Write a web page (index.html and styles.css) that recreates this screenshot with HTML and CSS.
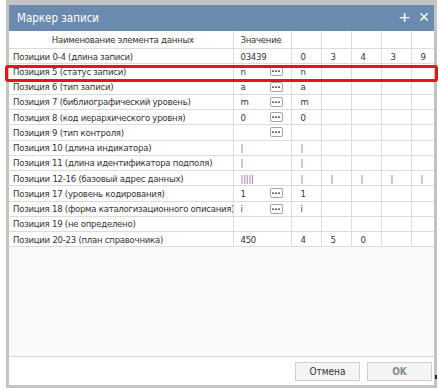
FILE: index.html
```html
<!DOCTYPE html>
<html lang="ru">
<head>
<meta charset="utf-8"/>
<title>Маркер записи</title>
<link rel="stylesheet" href="styles.css">
</head>
<body>
<div class="dialog">
  <div class="titlebar">
    <span class="title">Маркер записи</span>
    <span class="tools"><span class="tool">+</span><span class="tool close">×</span></span>
  </div>
  <div class="content">
    <table class="grid">
      <colgroup>
        <col class="c-name"><col class="c-val"><col class="c-ch"><col class="c-ch"><col class="c-ch"><col class="c-ch"><col class="c-last">
      </colgroup>
      <tr class="head">
        <th class="center">Наименование элемента данных</th><th>Значение</th><th></th><th></th><th></th><th></th><th></th>
      </tr>
      <tr><td>Позиции 0-4 (длина записи)</td><td>03439</td><td>0</td><td>3</td><td>4</td><td>3</td><td>9</td></tr>
      <tr><td>Позиция 5 (статус записи)</td><td><div class="val">n<span class="dots">...</span></div></td><td>n</td><td></td><td></td><td></td><td></td></tr>
      <tr><td>Позиция 6 (тип записи)</td><td><div class="val">a<span class="dots">...</span></div></td><td>a</td><td></td><td></td><td></td><td></td></tr>
      <tr><td>Позиция 7 (библиографический уровень)</td><td><div class="val">m<span class="dots">...</span></div></td><td>m</td><td></td><td></td><td></td><td></td></tr>
      <tr><td>Позиция 8 (код иерархического уровня)</td><td><div class="val">0<span class="dots">...</span></div></td><td>0</td><td></td><td></td><td></td><td></td></tr>
      <tr><td>Позиция 9 (тип контроля)</td><td><div class="val">&nbsp;<span class="dots">...</span></div></td><td></td><td></td><td></td><td></td><td></td></tr>
      <tr><td>Позиция 10 (длина индикатора)</td><td><span class="sp">|</span></td><td><span class="sp">|</span></td><td></td><td></td><td></td><td></td></tr>
      <tr><td>Позиция 11 (длина идентификатора подполя)</td><td><span class="sp">|</span></td><td><span class="sp">|</span></td><td></td><td></td><td></td><td></td></tr>
      <tr><td>Позиции 12-16 (базовый адрес данных)</td><td><span class="sp">|||||</span></td><td><span class="sp">|</span></td><td><span class="sp">|</span></td><td><span class="sp">|</span></td><td><span class="sp">|</span></td><td><span class="sp">|</span></td></tr>
      <tr><td>Позиция 17 (уровень кодирования)</td><td><div class="val">1<span class="dots">...</span></div></td><td>1</td><td></td><td></td><td></td><td></td></tr>
      <tr><td>Позиция 18 (форма каталогизационного описания)</td><td><div class="val">i<span class="dots">...</span></div></td><td>i</td><td></td><td></td><td></td><td></td></tr>
      <tr><td>Позиция 19 (не определено)</td><td></td><td></td><td></td><td></td><td></td><td></td></tr>
      <tr><td>Позиции 20-23 (план справочника)</td><td>450</td><td>4</td><td>5</td><td>0</td><td></td><td></td></tr>
    </table>
  </div>
  <div class="footer">
    <button class="btn">Отмена</button>
    <button class="btn disabled">OK</button>
  </div>
  <span class="highlight"></span>
  <span class="grip"></span>
</div>
</body>
</html>
```

FILE: styles.css
```css
body {
  margin: 0;
  background: #fff;
  font-family: "DejaVu Sans Condensed", "DejaVu Sans", sans-serif;
  font-stretch: semi-condensed;
  font-size: 9.5px;
  letter-spacing: -0.25px;
  color: #333;
}
.dialog {
  position: relative;
  margin-left: 6px;
  width: 425px;
  height: 380px;
  border: 3px solid #c3c3c3;
  border-top-width: 5px;
  background: #f9f9f9;
  display: flex;
  flex-direction: column;
}
.titlebar {
  height: 26px;
  background: #6a8bad;
  color: #fff;
  display: flex;
  align-items: center;
  justify-content: space-between;
  padding: 0 5px 0 8px;
}
.title {
  font-size: 11.5px;
  letter-spacing: 0;
}
.tools {
  display: flex;
  gap: 9px;
  font-family: "Liberation Sans", Arial, sans-serif;
  font-size: 19px;
}
.close { font-size: 18px; }
.content {
  flex: 1;
}
.grid {
  border-collapse: collapse;
  table-layout: fixed;
  width: 425px;
  background: #fff;
}
.c-name { width: 224px; }
.c-val { width: 58px; }
.c-ch { width: 30px; }
.c-last { width: 23px; }
.grid th,
.grid td {
  border: 1px solid #dcdcdc;
  height: 14.25px;
  padding: 0 0 0 4px;
  text-align: left;
  font-weight: normal;
  white-space: nowrap;
  overflow: hidden;
}
.grid tr td:first-child,
.grid tr th:first-child { border-left: none; }
.grid tr td:last-child,
.grid tr th:last-child { border-right: none; }
.grid th {
  height: 17px;
  border-top: none;
}
.grid th.center { text-align: center; }
.grid td + td,
.grid th + th { padding-left: 7px; }
.grid td + td + td { padding-left: 9px; }
.val {
  display: flex;
  align-items: center;
  justify-content: space-between;
  padding-right: 8px;
}
.dots {
  display: inline-block;
  width: 11px;
  height: 8px;
  line-height: 5px;
  border: 1px solid #a5a5a5;
  border-radius: 2px;
  background: #fff;
  font-size: 9px;
  font-weight: bold;
  letter-spacing: 0;
  text-align: center;
  color: #333;
}
.sp { color: #8c5a8c; }
.footer {
  height: 28px;
  border-top: 1px solid #d6d6d6;
  background: #fff;
  display: flex;
  align-items: center;
  justify-content: flex-end;
  gap: 7px;
  padding-right: 2px;
}
.btn {
  width: 65px;
  height: 19px;
  border: 1px solid #cfcfcf;
  background: #f4f4f4;
  font-family: inherit;
  font-stretch: inherit;
  font-size: 10px;
  color: #333;
  padding: 0;
}
.btn.disabled {
  color: #7d8c99;
  font-weight: bold;
}
.highlight {
  position: absolute;
  left: -4px;
  top: 60px;
  width: 427px;
  height: 11px;
  border: 3px solid #e8141b;
  border-radius: 3px;
}
.grip {
  position: absolute;
  right: -3px;
  bottom: 6px;
  width: 2px;
  height: 4px;
  background: #222;
}
```
